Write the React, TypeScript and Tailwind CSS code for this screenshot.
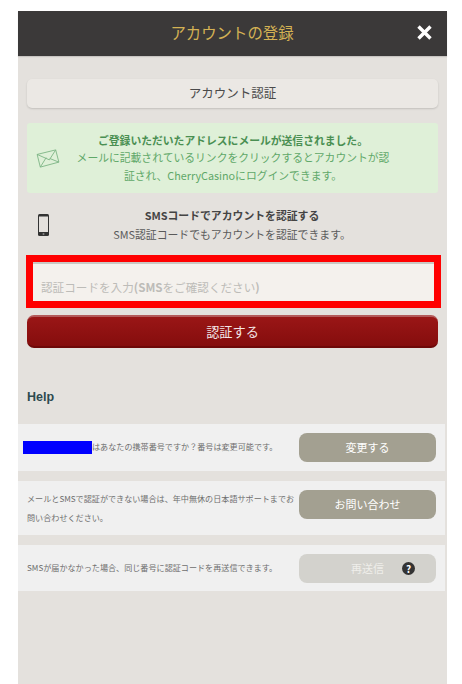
const jp = { fontFamily: '"Noto Sans CJK JP", "Noto Sans", sans-serif' };

function Row({ children, label, h, textClass, muted }: { children: React.ReactNode; label: string; h: string; textClass: string; muted?: boolean }) {
  return (
    <div className={`${h} w-[427px] bg-[#f0f0f0] flex items-start`}>
      <div className={`w-[281px] shrink-0 text-[8.1px] text-[#6e6e6e] ${textClass}`}>{children}</div>
      <div className={`mt-[9px] w-[137px] h-[29px] rounded-[8px] flex items-center justify-center text-[11px] text-white ${muted ? "bg-[#d3d2cd]" : "bg-[#a3a091]"}`}>
        {muted ? (
          <span className="flex items-center pl-[31px]">
            <span className="text-[#efeeea]">{label}</span>
            <span className="ml-[18px] w-[13px] h-[13px] rounded-full bg-[#333333] text-white text-[10px] font-bold flex items-center justify-center">?</span>
          </span>
        ) : label}
      </div>
    </div>
  );
}

export default function App() {
  return (
    <div className="w-[462px] h-[684px] bg-white pt-[11px] pl-[18px] overflow-hidden" style={jp}>
      <div className="w-[429px] h-[673px] bg-[#e4e1dd] flex flex-col">
        <div className="h-[45px] shrink-0 bg-[#3b3939] flex items-center relative shadow-[0_1px_1px_rgba(0,0,0,0.12)]">
          <div className="w-full text-center text-[15.4px] text-[#d4b254] pr-[1px] pb-[1px]">アカウントの登録</div>
          <svg className="absolute left-[399px] top-[14px]" width="15" height="15" viewBox="0 0 15 15">
            <path d="M1.5 1.5 L13.5 13.5 M13.5 1.5 L1.5 13.5" stroke="#fff" strokeWidth="3.4" />
          </svg>
        </div>

        <div className="mt-[23px] ml-[9px] w-[411px] h-[29px] rounded-[5px] bg-[#ebe8e4] shadow-[0_1px_2px_rgba(0,0,0,0.15)] flex items-center justify-center text-[12.5px] text-[#4a4a4a]">
          アカウント認証
        </div>

        <div className="mt-[15px] ml-[9px] w-[411px] h-[70px] rounded-[3px] bg-[#dff0d8] flex items-center text-[#5fa869]">
          <svg className="ml-[9px] shrink-0 mt-[1px]" width="24" height="19" viewBox="0 0 26 21" fill="none" stroke="#7db585" strokeWidth="1">
            <path d="M1 6 L21.5 1 L25 14.5 L4.5 20 Z" />
            <path d="M1 6 L14.5 12 L21.5 1" />
            <path d="M4.5 20 L11 9.5 M25 14.5 L15 10.5" />
          </svg>
          <div className="ml-[9px] w-[328px] text-center text-[10.8px] leading-[17.5px]">
            <div className="font-bold text-[#4a8f52]">ご登録いただいたアドレスにメールが送信されました。</div>
            <div>メールに記載されているリンクをクリックするとアカウントが認</div>
            <div>証され、CherryCasinoにログインできます。</div>
          </div>
        </div>

        <div className="mt-[13px] ml-[9px] w-[411px] h-[37px] flex items-center">
          <svg className="ml-[11px] shrink-0" width="11" height="22" viewBox="0 0 11 22">
            <rect x="0" y="0" width="11" height="22" rx="1.5" fill="#333" />
            <rect x="1" y="2.5" width="9" height="15.5" fill="#e4e1dd" />
            <circle cx="5.5" cy="20" r="1" fill="#888" />
          </svg>
          <div className="ml-[10px] w-[346px] text-center text-[10.85px] leading-[18.5px] text-[#5a5a5a]">
            <div className="font-bold text-[#444444]">SMSコードでアカウントを認証する</div>
            <div>SMS認証コードでもアカウントを認証できます。</div>
          </div>
        </div>

        <div className="mt-[12px] ml-[8px] w-[415px] h-[53px] border-[7px] border-solid border-[#ff0000] bg-[#f4f1ed]">
          <div className="h-full border-t-2 border-[#c9c8c3] flex items-center pl-[8px] pt-[10px] text-[11.6px] text-[#bdbcb8]">
            認証コードを入力<span className="font-bold">(SMS</span>をご確認ください<span className="font-bold">)</span>
          </div>
        </div>

        <div className="mt-[7px] ml-[9px] w-[411px] h-[33px] rounded-[7px] bg-gradient-to-b from-[#9a1616] to-[#850d0d] border-t-2 border-t-[#b35a5a] border-b-2 border-b-[#6e0808] flex items-center justify-center text-[13.2px] text-[#f3e5e5]">
          認証する
        </div>

        <div className="mt-[40px] ml-[9px] h-[18px] flex items-center text-[12.5px] font-bold text-[#2d4a4f]" style={{ fontFamily: '"Liberation Sans", sans-serif' }}>
          Help
        </div>

        <div className="mt-[18px] flex flex-col gap-[10px]">
          <Row h="h-[47px]" label="変更する" textClass="flex items-center h-full">
            <span className="w-[69px] h-[13px] ml-[5px] bg-[#0000ff] shrink-0" />
            <span>はあなたの携帯番号ですか？番号は変更可能です。</span>
          </Row>
          <Row h="h-[54px]" label="お問い合わせ" textClass="pl-[9px] pr-[1px] pt-[9px] leading-[18.5px]">
            メールとSMSで認証ができない場合は、年中無休の日本語サポートまでお問い合わせください。
          </Row>
          <Row h="h-[46px]" label="再送信" textClass="pl-[9px] h-full flex items-center" muted>
            SMSが届かなかった場合、同じ番号に認証コードを再送信できます。
          </Row>
        </div>
      </div>
    </div>
  );
}
